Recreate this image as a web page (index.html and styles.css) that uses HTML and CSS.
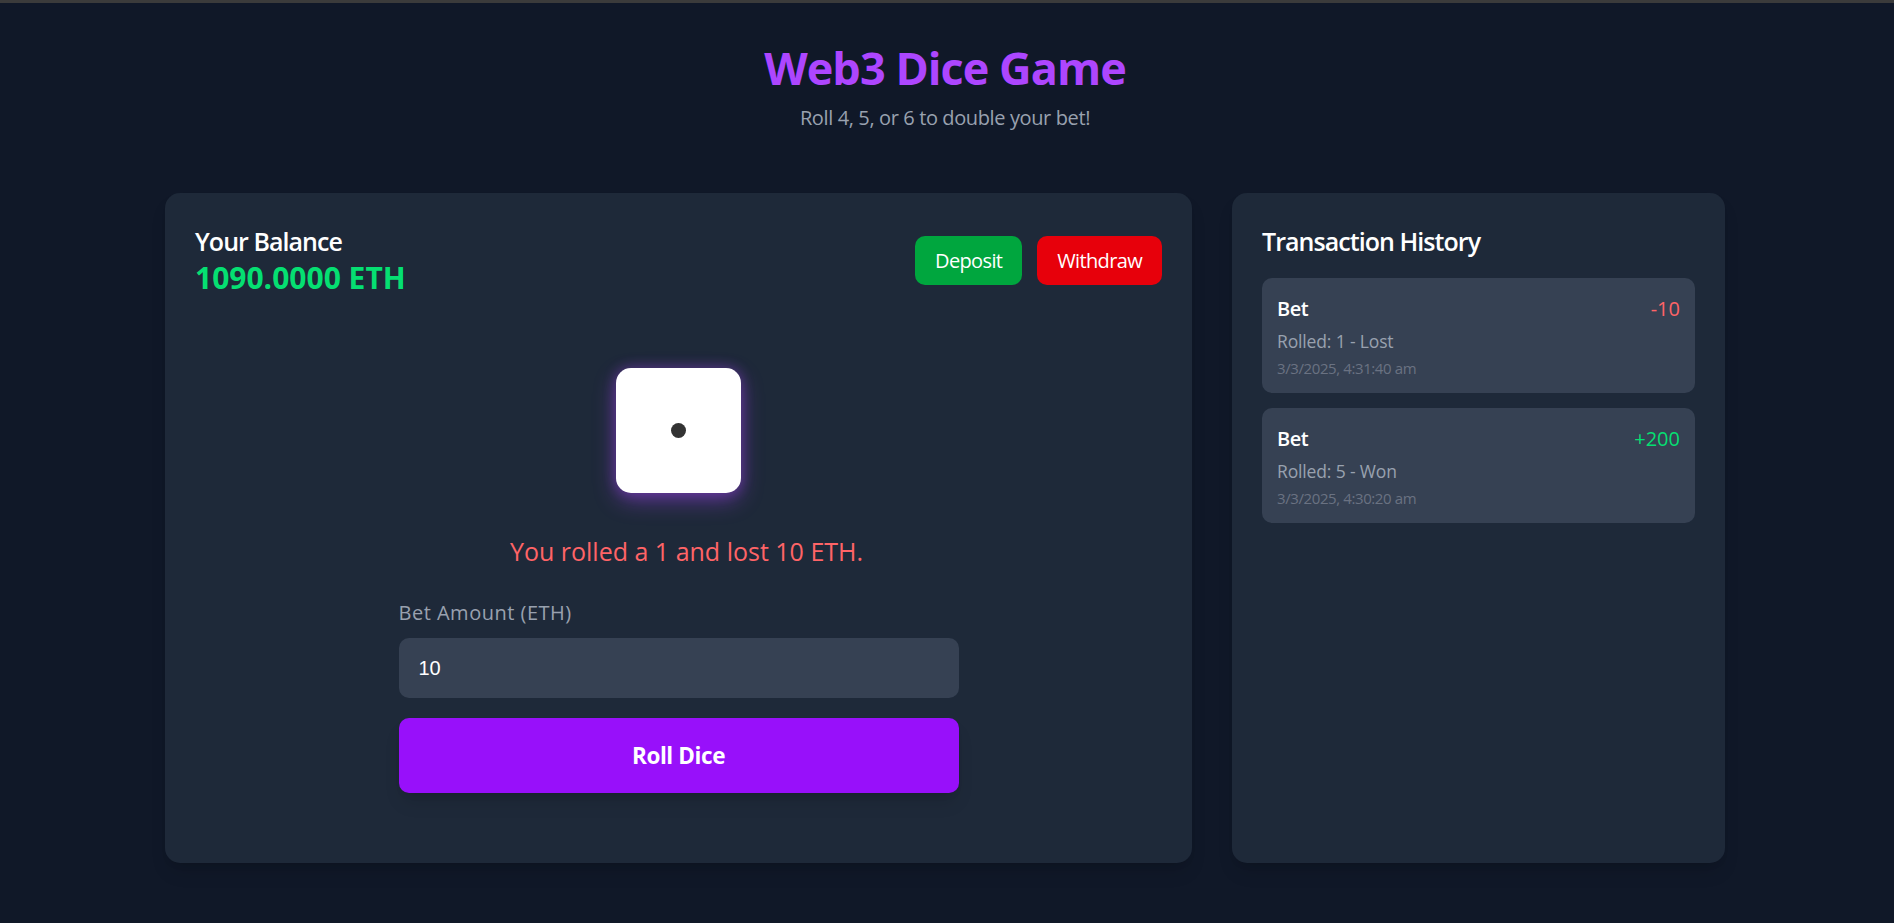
FILE: index.html
```html
<!DOCTYPE html>
<html lang="en">
<head>
<meta charset="utf-8">
<title>Web3 Dice Game</title>
<link rel="stylesheet" href="styles.css">
</head>
<body>
<div class="topline"></div>
<div class="wrap">
  <main class="container">
    <header class="header">
      <h1 class="title">Web3 Dice Game</h1>
      <p class="subtitle">Roll 4, 5, or 6 to double your bet!</p>
    </header>
    <div class="grid">
      <section class="card game">
        <div class="game-head">
          <div class="balance">
            <h2 class="card-title">Your Balance</h2>
            <div class="balance-value">1090.0000 ETH</div>
          </div>
          <div class="actions">
            <button class="btn btn-deposit">Deposit</button>
            <button class="btn btn-withdraw">Withdraw</button>
          </div>
        </div>
        <div class="dice-area">
          <div class="dice"><span class="pip"></span></div>
        </div>
        <p class="result">You rolled a 1 and lost 10 ETH.</p>
        <div class="bet-form">
          <label class="bet-label" for="bet">Bet Amount (ETH)</label>
          <input class="bet-input" id="bet" type="text" value="10">
          <button class="roll-btn">Roll Dice</button>
        </div>
      </section>
      <aside class="card history">
        <h2 class="card-title">Transaction History</h2>
        <ul class="tx-list">
          <li class="tx">
            <div class="tx-row">
              <span class="tx-type">Bet</span>
              <span class="tx-amount neg">-10</span>
            </div>
            <div class="tx-desc">Rolled: 1 - Lost</div>
            <div class="tx-date">3/3/2025, 4:31:40 am</div>
          </li>
          <li class="tx">
            <div class="tx-row">
              <span class="tx-type">Bet</span>
              <span class="tx-amount pos">+200</span>
            </div>
            <div class="tx-desc">Rolled: 5 - Won</div>
            <div class="tx-date">3/3/2025, 4:30:20 am</div>
          </li>
        </ul>
      </aside>
    </div>
  </main>
</div>
</body>
</html>
```
FILE: styles.css
```css
* { box-sizing: border-box; }

html, body {
  margin: 0;
  padding: 0;
}

body {
  background: #101828;
  color: #f3f4f6;
  font-family: "Open Sans", "Noto Sans", "Liberation Sans", sans-serif;
  min-height: 100vh;
}

.topline {
  height: 3px;
  background: #3b3b3b;
}

.wrap {
  padding: 40px 4px 40px 0;
}

.container {
  max-width: 1560px;
  margin: 0 auto;
}

.header {
  text-align: center;
  margin-bottom: 60px;
}

.title {
  margin: 0 0 10px;
  font-size: 45px;
  line-height: 50px;
  font-weight: 700;
  letter-spacing: -0.95px;
  color: #ad46ff;
}

.subtitle {
  margin: 0;
  font-size: 20px;
  line-height: 30px;
  letter-spacing: -0.38px;
  color: #99a1af;
}

.grid {
  display: grid;
  grid-template-columns: 1027px 493px;
  gap: 40px;
}

.card {
  background: #1e2939;
  border-radius: 15px;
  padding: 30px;
  box-shadow: 0 12px 19px -4px rgba(0, 0, 0, 0.12), 0 5px 8px -5px rgba(0, 0, 0, 0.12);
}

.card-title {
  margin: 0 0 -1px;
  padding-top: 1px;
  font-size: 25px;
  line-height: 35px;
  font-weight: 600;
  letter-spacing: -0.95px;
  color: #ffffff;
}

.game-head {
  display: flex;
  justify-content: space-between;
  align-items: center;
}

.balance-value {
  font-size: 30px;
  line-height: 40px;
  font-weight: 700;
  color: #05df72;
}

.actions {
  display: flex;
  gap: 15px;
}

.btn {
  border: 0;
  border-radius: 10px;
  padding: 10px 20px;
  height: 49px;
  font-family: inherit;
  font-size: 20px;
  line-height: 29px;
  letter-spacing: -0.65px;
  color: #ffffff;
  cursor: pointer;
}

.btn-deposit { background: #00a63e; }
.btn-withdraw { background: #e7000b; }

.dice-area {
  display: flex;
  justify-content: center;
  margin-top: 70px;
}

.dice {
  width: 125px;
  height: 125px;
  background: #ffffff;
  border-radius: 15px;
  display: flex;
  align-items: center;
  justify-content: center;
  box-shadow: 0 8px 22px 0 rgba(173, 70, 255, 0.4), 0 0 12px 2px rgba(173, 70, 255, 0.25);
}

.pip {
  width: 15px;
  height: 15px;
  border-radius: 50%;
  background: #333333;
}

.result {
  margin: 40px 0 29px;
  padding: 1px 0 0 16px;
  text-align: center;
  font-size: 25px;
  line-height: 35px;
  color: #ff6467;
}

.bet-form {
  width: 560px;
  margin: 0 auto 40px;
  display: flex;
  flex-direction: column;
}

.bet-label {
  font-size: 20px;
  line-height: 30px;
  letter-spacing: 0.5px;
  color: #99a1af;
  margin-bottom: 10px;
}

.bet-input {
  height: 60px;
  border: 0;
  border-radius: 10px;
  background: #364153;
  color: #ffffff;
  padding: 0 20px;
  font-family: "Liberation Sans", Arial, sans-serif;
  font-size: 20px;
  outline: none;
}

.roll-btn {
  margin-top: 20px;
  height: 75px;
  border: 0;
  border-radius: 10px;
  background: #9810fa;
  color: #ffffff;
  font-family: inherit;
  font-size: 22.5px;
  font-weight: 700;
  letter-spacing: -0.4px;
  box-shadow: 0 12px 19px -4px rgba(0, 0, 0, 0.12), 0 5px 8px -5px rgba(0, 0, 0, 0.12);
  cursor: pointer;
}

.tx-list {
  list-style: none;
  margin: 20px 0 0;
  padding: 0;
  display: flex;
  flex-direction: column;
  gap: 15px;
}

.tx {
  background: #364153;
  border-radius: 10px;
  padding: 15px;
}

.tx-row {
  display: flex;
  justify-content: space-between;
  font-size: 20px;
  line-height: 30px;
  padding-top: 1px;
  margin-bottom: -1px;
}

.tx-type {
  font-weight: 600;
  letter-spacing: -0.5px;
  color: #ffffff;
}

.tx-amount.neg { color: #ff6467; }
.tx-amount.pos { color: #05df72; }

.tx-desc {
  margin-top: 5px;
  font-size: 17.5px;
  line-height: 25px;
  padding-top: 1px;
  margin-bottom: -1px;
  letter-spacing: -0.15px;
  color: #99a1af;
}

.tx-date {
  margin-top: 5px;
  font-size: 15px;
  line-height: 20px;
  letter-spacing: -0.4px;
  color: #6a7282;
}
```
